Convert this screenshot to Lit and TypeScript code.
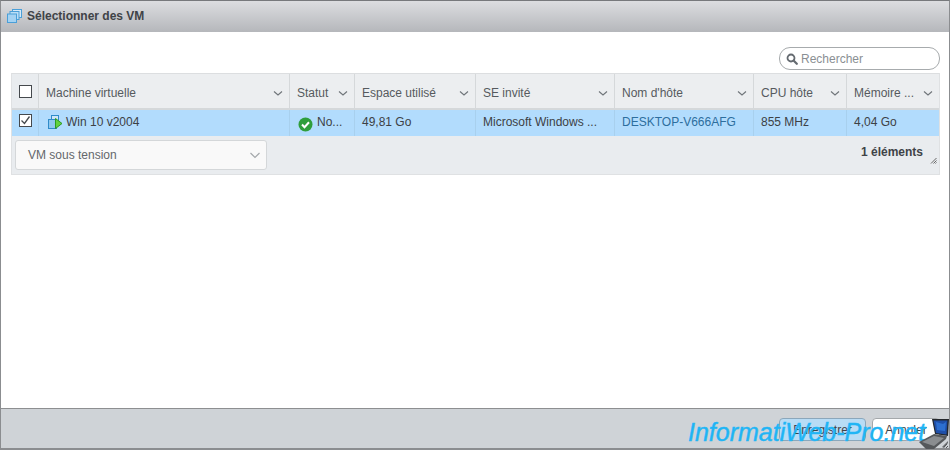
import { LitElement, html, css, svg } from "lit";
import { customElement } from "lit/decorators.js";

const chevron = svg`<svg width="10" height="6" viewBox="0 0 10 6"><path d="M1 1.5l4 3.5 4-3.5" fill="none" stroke="#6f7479" stroke-width="1.1"/></svg>`;

const cols = [
  { label: "Machine virtuelle", w: 251 },
  { label: "Statut", w: 65 },
  { label: "Espace utilisé", w: 121 },
  { label: "SE invité", w: 139 },
  { label: "Nom d'hôte", w: 139 },
  { label: "CPU hôte", w: 93 },
  { label: "Mémoire ...", w: 93 },
];

@customElement("app-root")
export class AppRoot extends LitElement {
  static styles = css`
    :host { display: block; position: relative; width: 950px; height: 450px; font-family: "Liberation Sans", Arial, sans-serif; color: #444; overflow: hidden; }
    .dialog { box-sizing: border-box; width: 950px; height: 450px; border: 1px solid #8b8d90; border-top-color: #77797c; border-bottom: 2px solid #8b8d90; display: flex; flex-direction: column; background: #fff; }
    .title { height: 31px; flex: none; box-sizing: border-box; display: flex; align-items: center; gap: 4px; padding: 0 0 2px 6px; background: linear-gradient(#dcdde0, #b5b7bb); font-size: 12px; font-weight: bold; color: #3f4347; }
    .body { flex: 1; padding: 15px 9px 0 10px; display: flex; flex-direction: column; min-height: 0; }
    .search-row { display: flex; justify-content: flex-end; height: 26px; flex: none; }
    .search { box-sizing: border-box; width: 161px; height: 23px; border: 1px solid #a7abad; border-radius: 11px; display: flex; align-items: center; gap: 3px; padding-left: 6px; color: #8a8f93; font-size: 12px; background: #fff; }
    .grid { width: 929px; box-sizing: border-box; border: 1px solid #dfe1e3; border-top-color: #dcdee0; background: #e9ecef; }
    .head { display: flex; height: 34px; border-bottom: 2px solid #d5d8da; box-sizing: content-box; }
    .hcell { box-sizing: border-box; display: flex; align-items: center; justify-content: space-between; padding: 4px 6px 0 7px; font-size: 12px; color: #565a5e; border-left: 1px solid #d5d8da; white-space: nowrap; background: #eceef0; }
    .check { width: 26px; flex: none; display: flex; align-items: center; justify-content: center; box-sizing: border-box; }
    .box { box-sizing: border-box; width: 13px; height: 13px; border: 1px solid #45494d; background: #fff; display: block; }
    .box svg { display: block; }
    .row { display: flex; height: 26px; background: #b2dcfd; font-size: 12px; color: #3d4145; }
    .row .check { align-items: flex-start; padding-top: 4px; }
    .cell { box-sizing: border-box; display: flex; align-items: center; padding: 0 7px 2px; border-left: 1px solid #a8d0ee; white-space: nowrap; overflow: hidden; }
    .cell.vm { gap: 3px; padding-left: 8px; }
    .cell.status { gap: 4px; padding: 2px 0 0 8px; }
    .cell.status span { margin-bottom: 4px; }
    .link { color: #2d6e9e; }
    .foot { position: relative; display: flex; align-items: flex-start; justify-content: space-between; height: 38px; padding: 4px 16px 0 3px; box-sizing: border-box; }
    .select { box-sizing: border-box; width: 252px; height: 30px; border: 1px solid #d4d7d9; border-radius: 3px; background: #f9f9f9; display: flex; align-items: center; justify-content: space-between; padding: 0 5px 0 12px; font-size: 12px; color: #63676b; }
    .count { font-size: 12px; font-weight: bold; color: #3f4347; margin-top: 5px; }
    .grip { position: absolute; right: 2px; bottom: 10px; }
    .footer { height: 40px; flex: none; box-sizing: border-box; border-top: 1px solid #8d8f91; background: #cfd3d7; display: flex; justify-content: flex-end; align-items: flex-start; padding: 9px 9px 0 0; gap: 6px; }
    .btn { box-sizing: border-box; height: 23px; border-radius: 4px; border: 1px solid #a4a8ab; display: flex; align-items: center; justify-content: center; font-size: 12px; color: #3f4347; background: #fff; }
    .save { width: 87px; background: #b8dcf5; border-color: #8ba7bb; }
    .cancel { width: 68px; }
    .mark { position: absolute; left: 688px; top: 415px; font-family: "Liberation Sans", Arial, sans-serif; font-style: italic; font-size: 25px; line-height: 34px; color: #1fb4f5; -webkit-text-stroke: 0.5px #27b8f6; white-space: nowrap; }
    .laptop { position: absolute; right: 0; top: 418px; }
  `;

  render() {
    return html`<div class="dialog">
      <div class="title">
        <svg width="16" height="16" viewBox="0 0 16 16">
          <rect x="5.5" y="1.5" width="9" height="8" fill="#d5e9f8" stroke="#4a9fd8"/>
          <rect x="3" y="3.5" width="9" height="8" fill="#bcdef5" stroke="#4a9fd8"/>
          <rect x="0.5" y="6" width="9" height="8.5" fill="#a4d2f2" stroke="#4a9fd8"/>
        </svg>
        <span>Sélectionner des VM</span>
      </div>
      <div class="body">
        <div class="search-row">
          <div class="search">
            <svg width="12" height="12" viewBox="0 0 12 12"><circle cx="5" cy="5" r="3.5" fill="none" stroke="#646a70" stroke-width="1.8"/><path d="M7.8 7.8l3 3" stroke="#646a70" stroke-width="2.2" stroke-linecap="round"/></svg>
            <span>Rechercher</span>
          </div>
        </div>
        <div class="grid">
          <div class="head">
            <div class="check"><span class="box"></span></div>
            ${cols.map((c) => html`<div class="hcell" style="width:${c.w}px"><span>${c.label}</span>${chevron}</div>`)}
          </div>
          <div class="row">
            <div class="check"><span class="box">
              <svg width="11" height="11" viewBox="0 0 11 11"><path d="M1.5 5.5l3 3 5-7" fill="none" stroke="#45494d" stroke-width="1.3"/></svg>
            </span></div>
            <div class="cell vm" style="width:251px">
              <svg width="16" height="16" viewBox="0 0 16 16">
                <rect x="4.5" y="1.5" width="7" height="6" fill="#cfe6f7" stroke="#2f8bc9"/>
                <rect x="1.5" y="5.5" width="8" height="9" fill="#8fc8ef" stroke="#2f8bc9"/>
                <path d="M8.5 4.5l6.5 5-6.5 5z" fill="#62d13f" stroke="#2d9a23"/>
              </svg>
              <span>Win 10 v2004</span>
            </div>
            <div class="cell status" style="width:65px">
              <svg width="15" height="15" viewBox="0 0 15 15"><circle cx="7.5" cy="7.5" r="7" fill="#2f9e3c"/><path d="M4 7.5l2.5 2.7L11 5.3" fill="none" stroke="#fff" stroke-width="2"/></svg>
              <span>No...</span>
            </div>
            <div class="cell" style="width:121px">49,81 Go</div>
            <div class="cell" style="width:139px">Microsoft Windows ...</div>
            <div class="cell link" style="width:139px">DESKTOP-V666AFG</div>
            <div class="cell" style="width:93px">855 MHz</div>
            <div class="cell" style="width:93px">4,04 Go</div>
          </div>
          <div class="foot">
            <div class="select"><span>VM sous tension</span><svg width="12" height="7" viewBox="0 0 12 7"><path d="M1.5 1l4.5 4.5L10.500 1" fill="none" stroke="#a4a8ab" stroke-width="1.2"/></svg></div>
            <div class="count">1 éléments</div>
            <svg class="grip" width="7" height="7" viewBox="0 0 7 7"><path d="M6.5 1L1 6.5M6.5 3.5L3.500 6.5M6.5 5.5L5.500 6.500" stroke="#666" stroke-width="1"/></svg>
          </div>
        </div>
      </div>
      <div class="footer">
        <div class="btn save">Enregistrer</div>
        <div class="btn cancel">Annuler</div>
      </div>
    </div>
    <div class="mark">InformatiWeb-Pro.net</div>
    <svg class="laptop" width="32" height="32" viewBox="0 0 32 32">
      <path d="M14 1h17l-1 17-13-2z" fill="#24282d"/>
      <path d="M15.500 2.500h14l-1 14-10.500-1.500z" fill="#1f4fa8"/>
      <path d="M18 4l7 2 3-2-1 9-8-1z" fill="#2d6fd0"/>
      <path d="M1 24l15-8 13 2-1 3-12 10H8z" fill="#55585b"/>
      <path d="M4 24l12-6 10 2-10 8z" fill="#8a8d90"/>
      <path d="M24 29l6-6v2l-4 5z" fill="#6a6d70"/>
      <path d="M26 29l3-3M28 30l2-2" stroke="#55585b"/>
    </svg>`;
  }
}
